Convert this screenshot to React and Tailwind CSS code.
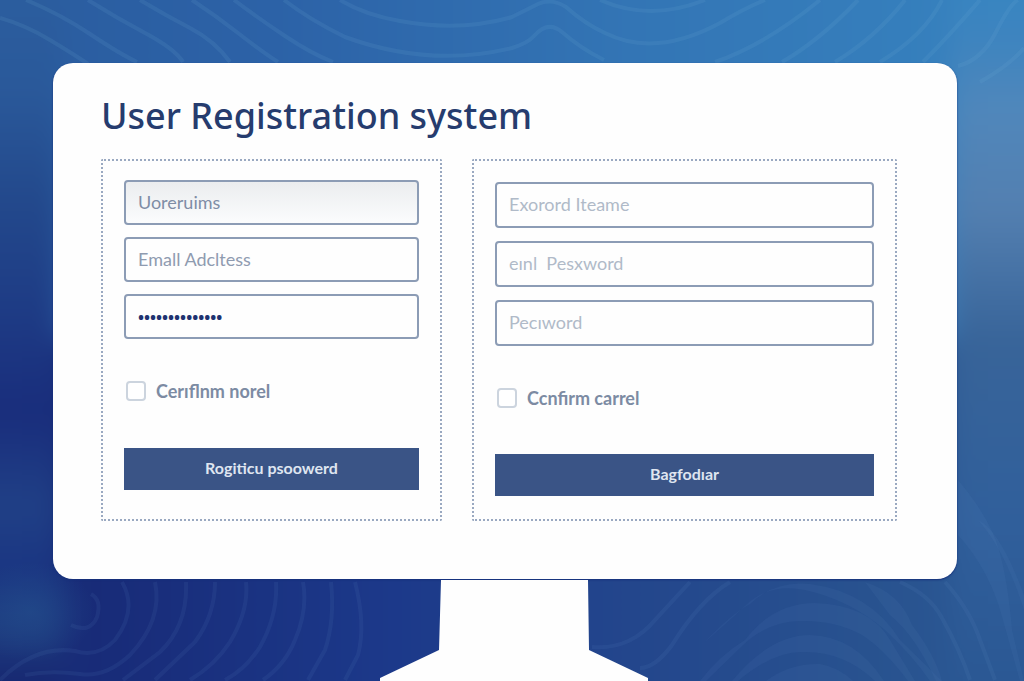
const TOP_WAVES = [
  "M0 18Q25 25 50 40T88 64",
  "M26 0Q60 14 90 34T137 62",
  "M88 0Q115 17 145 33T183 62",
  "M140 0Q165 15 190 28T230 62",
  "M192 0Q215 15 238 33T278 62",
  "M234 0Q258 18 285 36T333 62",
  "M284 0Q310 20 345 37Q430 68 512 48Q528 43 534 36Q548 20 562 32Q580 48 604 60",
  "M340 0Q365 15 400 21Q460 32 512 17L538 4Q552 -2 566 7Q585 24 605 33Q655 58 720 23Q745 8 765 0",
  "M600 0Q650 22 705 0",
  "M715 62Q765 45 820 0",
  "M782 62Q820 40 858 0",
  "M835 62Q875 38 905 0",
  "M880 62Q925 35 942 0",
  "M923 62Q950 35 980 0",
  "M958 66Q982 60 996 32T1018 0",
  "M980 82Q1010 65 1024 48",
];

const BOTTOM_WAVES = [
  "M91 594Q102 600 97 617Q90 634 71 625",
  "M122 582Q138 610 115 640Q98 658 75 651Q35 645 0 680",
  "M155 582Q163 620 130 655Q105 678 80 674Q50 670 25 675",
  "M186 582Q188 625 160 652L123 680",
  "M215 582Q215 615 195 642L155 680",
  "M246 582Q249 610 230 642Q215 665 190 680",
  "M276 582Q278 615 260 647Q245 670 225 680",
  "M303 582Q308 610 295 640Q285 665 263 680",
  "M331 582Q335 620 325 650L308 680",
  "M355 582Q366 625 358 655L345 680",
  "M592 647Q630 650 655 620L690 582",
  "M640 668Q655 668 672 645Q700 600 730 582",
  "M945 582Q970 610 980 640L995 680",
  "M900 582Q930 595 942 618Q960 650 970 680",
];

const BANDS = [
  "M674 681L705 642Q730 615 750 604Q775 580 810 584Q870 592 900 640L942 681H930Q912 655 885 630Q850 600 805 590Q768 583 745 606Q730 620 705 642Z",
  "M700 681Q720 655 745 640Q773 603 815 603Q870 605 890 640L915 681H908Q885 650 862 635Q835 620 800 621Q765 622 740 648L706 681Z",
  "M732 681Q770 635 810 635Q855 636 884 681H875Q845 652 805 652Q775 650 738 681Z",
  "M766 681Q790 663 820 664Q838 667 853 681Z",
  "M865 582Q900 593 912 625Q935 655 942 681H936Q915 635 890 615Z",
  "M958 480Q990 518 999 550T1012 630L1024 681H1020L1003 620Q990 570 958 535Z",
  "M978 520Q1000 530 1024 595V610Q1005 550 978 520Z",
];

function Field({ id, label, className }) {
  return (
    <input
      id={id}
      type="text"
      aria-label={label}
      placeholder={label}
      className={`w-full min-w-0 rounded border-2 border-[#8c9cb5] px-3 pb-0.5 text-lg ${className}`}
    />
  );
}

function Check({ id, label }) {
  return (
    <div className="flex items-center gap-2.5 pl-0.5">
      <input
        id={id}
        type="checkbox"
        className="size-5 appearance-none rounded border-2 border-[#ccd4de] bg-white checked:bg-[#3a5486]"
      />
      <label htmlFor={id} className="text-lg leading-5 font-bold text-[#7c8ba3]">
        {label}
      </label>
    </div>
  );
}

function Submit({ children }) {
  return (
    <button type="submit" className="h-[42px] w-full bg-[#3a5486] pb-0.5 text-base font-bold text-[#dfe5f0]">
      {children}
    </button>
  );
}

const panel = "flex min-w-0 flex-col rounded-xs border-2 border-dotted border-[#9aa9c1] px-[21px]";
const stay = (e) => e.preventDefault();

export default function App() {
  return (
    <div className="relative isolate min-h-screen overflow-hidden bg-[#23509a] pt-[63px] pr-[67px] pl-[53px] font-['Lato','Noto_Sans',sans-serif]">
      <svg
        aria-hidden="true"
        viewBox="0 0 1024 681"
        preserveAspectRatio="none"
        className="absolute inset-0 -z-10 size-full"
      >
        <defs>
          <linearGradient id="top">
            <stop offset="0" stopColor="#2a5b9d" />
            <stop offset="0.3" stopColor="#2c62a7" />
            <stop offset="0.6" stopColor="#3375b5" />
            <stop offset="1" stopColor="#3785c1" />
          </linearGradient>
          <linearGradient id="left" x1="0" y1="0" x2="0" y2="1">
            <stop offset="0" stopColor="#2b5e9f" />
            <stop offset="0.15" stopColor="#2a599a" />
            <stop offset="0.3" stopColor="#23498c" />
            <stop offset="0.45" stopColor="#1e3c85" />
            <stop offset="0.6" stopColor="#192d7c" />
            <stop offset="0.73" stopColor="#204086" />
            <stop offset="0.82" stopColor="#1a3582" />
            <stop offset="0.9" stopColor="#1e3d80" />
            <stop offset="1" stopColor="#14206c" />
          </linearGradient>
          <linearGradient id="right" x1="0" y1="0" x2="0" y2="1">
            <stop offset="0" stopColor="#3785c1" />
            <stop offset="0.08" stopColor="#3d84bf" />
            <stop offset="0.18" stopColor="#5087bb" />
            <stop offset="0.32" stopColor="#537fb0" />
            <stop offset="0.5" stopColor="#386499" />
            <stop offset="0.75" stopColor="#305f9b" />
            <stop offset="1" stopColor="#2a5793" />
          </linearGradient>
          <linearGradient id="bottom">
            <stop offset="0" stopColor="#1b3178" />
            <stop offset="0.15" stopColor="#182b78" />
            <stop offset="0.4" stopColor="#1c398a" />
            <stop offset="0.6" stopColor="#23468c" />
            <stop offset="0.8" stopColor="#28528f" />
            <stop offset="1" stopColor="#2d5c96" />
          </linearGradient>
          <radialGradient id="glow">
            <stop offset="0" stopColor="#234e8c" stopOpacity="0.6" />
            <stop offset="1" stopColor="#234e8c" stopOpacity="0" />
          </radialGradient>
          <filter id="soft" x="-10%" y="-10%" width="120%" height="120%" colorInterpolationFilters="sRGB">
            <feGaussianBlur stdDeviation="14" />
          </filter>
        </defs>
        <g filter="url(#soft)">
          <rect x="-80" y="-80" width="1184" height="420" fill="url(#top)" />
          <rect x="-80" y="340" width="1184" height="421" fill="url(#bottom)" />
          <rect x="-80" y="-20" width="140" height="721" fill="url(#left)" />
          <rect x="950" y="-20" width="160" height="721" fill="url(#right)" />
        </g>
        <ellipse cx="30" cy="612" rx="65" ry="50" fill="url(#glow)" />
        <g fill="none" stroke="#73b0d5" strokeOpacity="0.13" strokeWidth="4">
          {TOP_WAVES.map((d) => (
            <path key={d} d={d} />
          ))}
        </g>
        <g fill="none" stroke="#73a0d0" strokeOpacity="0.09" strokeWidth="4">
          {BOTTOM_WAVES.map((d) => (
            <path key={d} d={d} />
          ))}
        </g>
        <g fill="#73a0d0" fillOpacity="0.07">
          {BANDS.map((d) => (
            <path key={d} d={d} />
          ))}
        </g>
      </svg>

      <main className="rounded-[20px] bg-[#fefefe] pt-[30px] pr-[60px] pb-[58px] pl-12 shadow-[0_1px_2px_#15307a]">
        <h1 className="font-['Noto_Sans',sans-serif] text-4xl leading-[46px] font-medium text-[#263c6e]">
          User Registration system
        </h1>
        <div className="mt-5 grid grid-cols-[341fr_425fr] gap-[30px]">
          <form onSubmit={stay} className={`${panel} pt-[19px] pb-7`}>
            <div className="flex flex-col gap-3">
              <Field
                id="username"
                label="Uoreruims"
                className="h-[45px] bg-linear-to-b from-[#ebedef] to-[#fbfcfd] placeholder:text-[#7f8da6]"
              />
              <Field id="email" label="Emall Adcltess" className="h-[45px] placeholder:text-[#8f9bb0]" />
              <input
                id="secret"
                type="password"
                aria-label="Password"
                defaultValue="secretsecret12"
                className="h-[45px] w-full min-w-0 rounded border-2 border-[#8c9cb5] px-3 font-['Noto_Sans',sans-serif] text-base font-bold text-[#1d3270]"
              />
            </div>
            <div className="mt-[42px] mb-[47px]">
              <Check id="confirm-left" label="Cerıflnm norel" />
            </div>
            <Submit>Rogiticu psoowerd</Submit>
          </form>
          <form onSubmit={stay} className={`${panel} pt-[21px] pb-[23px]`}>
            <div className="flex flex-col gap-[13px]">
              <Field id="name" label="Exorord Iteame" className="h-[46px] placeholder:text-[#b0bac8]" />
              <Field id="ent" label="eınl  Pesxword" className="h-[46px] placeholder:text-[#b0bac8]" />
              <Field id="pec" label="Pecıword" className="h-[46px] placeholder:text-[#b0bac8]" />
            </div>
            <div className="mt-[42px] mb-[46px]">
              <Check id="confirm-right" label="Ccnfirm carrel" />
            </div>
            <Submit>Bagfodıar</Submit>
          </form>
        </div>
      </main>

      <div aria-hidden="true" className="flex justify-center pt-px pl-[18px]">
        <svg viewBox="0 0 268 101" className="h-[101px] w-[268px] shrink-0">
          <path d="M61 0H208L209 70L268 98V101H0V98L59 70Z" fill="#fefefe" />
        </svg>
      </div>
    </div>
  );
}
